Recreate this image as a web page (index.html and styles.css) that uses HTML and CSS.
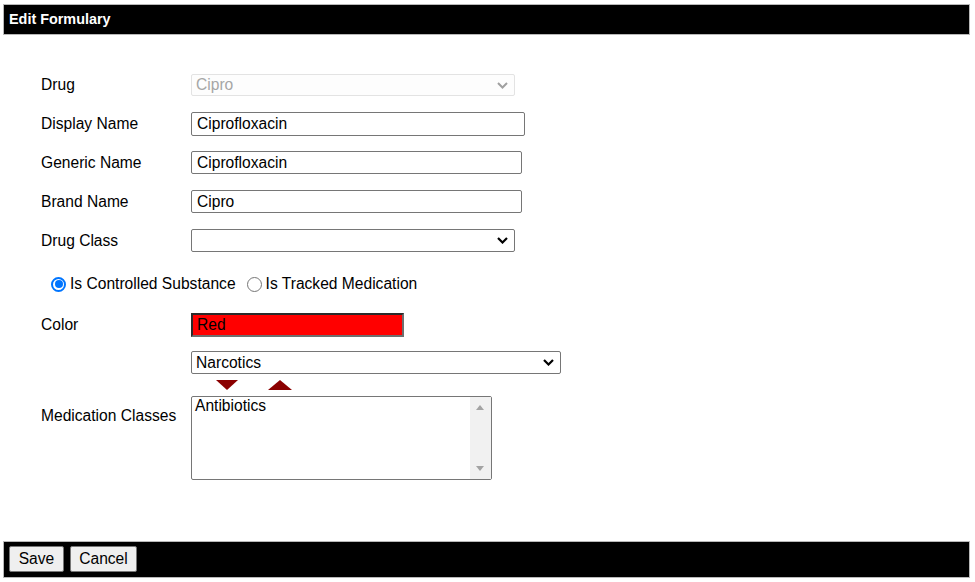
FILE: index.html
```html
<!DOCTYPE html>
<html>
<head>
<meta charset="utf-8">
<title>Edit Formulary</title>
<link rel="stylesheet" href="styles.css">
</head>
<body>
<div class="page">
  <div class="titlebar">Edit Formulary</div>
  <div class="form">
    <div class="row">
      <label class="lbl">Drug</label>
      <div class="sel sel-drug disabled">
        <span class="sel-text">Cipro</span>
        <svg class="chev" width="11" height="7" viewBox="0 0 11 7"><path d="M1 1 L5.5 5.5 L10 1" fill="none" stroke="#a0a0a0" stroke-width="2"/></svg>
      </div>
    </div>
    <div class="row">
      <label class="lbl">Display Name</label>
      <input class="txt txt-display" type="text" value="Ciprofloxacin">
    </div>
    <div class="row">
      <label class="lbl">Generic Name</label>
      <input class="txt txt-generic" type="text" value="Ciprofloxacin">
    </div>
    <div class="row">
      <label class="lbl">Brand Name</label>
      <input class="txt txt-generic" type="text" value="Cipro">
    </div>
    <div class="row">
      <label class="lbl">Drug Class</label>
      <div class="sel sel-class">
        <span class="sel-text"></span>
        <svg class="chev" width="11" height="7" viewBox="0 0 11 7"><path d="M1 1 L5.5 5.5 L10 1" fill="none" stroke="#000" stroke-width="2.2"/></svg>
      </div>
    </div>
    <div class="radios">
      <span class="radio checked"></span><span class="rlabel">Is Controlled Substance</span>
      <span class="radio"></span><span class="rlabel">Is Tracked Medication</span>
    </div>
    <div class="row row-color">
      <label class="lbl">Color</label>
      <div class="colorbox">Red</div>
    </div>
    <div class="row row-med">
      <label class="lbl">Medication Classes</label>
      <div class="stack">
        <div class="sel sel-narc">
          <span class="sel-text">Narcotics</span>
          <svg class="chev" width="11" height="7" viewBox="0 0 11 7"><path d="M1 1 L5.5 5.5 L10 1" fill="none" stroke="#000" stroke-width="2.2"/></svg>
        </div>
        <div class="arrows">
          <span class="tri-down"></span>
          <span class="tri-up"></span>
        </div>
        <div class="listbox">
          <div class="list-items"><div class="item">Antibiotics</div></div>
          <div class="scroll">
            <span class="sc-up"></span>
            <span class="sc-down"></span>
          </div>
        </div>
      </div>
    </div>
  </div>
  <div class="footer">
    <button class="btn btn-save">Save</button>
    <button class="btn btn-cancel">Cancel</button>
  </div>
</div>
</body>
</html>
```
FILE: styles.css
```css
* { box-sizing: border-box; }
html, body { margin: 0; padding: 0; background: #fff; }
body { font-family: "Liberation Sans", Arial, sans-serif; font-size: 15.6px; color: #000; }

.page { padding: 4px 5px 0 3px; width: 975px; }

.titlebar {
  height: 31px;
  background: #000;
  border: 1px solid #b8b8b8;
  color: #fff;
  font-weight: bold;
  font-size: 14.4px;
  line-height: 29px;
  padding-left: 5px;
}

.form { padding: 30px 0 0 38px; }

.row { display: flex; align-items: center; height: 39px; }
.lbl { width: 150px; flex: none; }

.txt {
  font-family: "Liberation Sans", Arial, sans-serif;
  font-size: 15.6px;
  color: #000;
  height: 23px;
  border: 1px solid #767676;
  border-radius: 2px;
  padding: 0 5px;
  background: #fff;
  outline: none;
}
.txt-display { width: 334px; height: 24px; }
.txt-generic { width: 331px; }

.sel {
  position: relative;
  height: 23px;
  border: 1px solid #767676;
  border-radius: 2px;
  background: #fff;
  padding: 0 4px;
  line-height: 21px;
  display: flex;
  align-items: center;
}
.sel .chev { position: absolute; right: 6px; top: 7px; }
.sel-drug { width: 324px; height: 22px; }
.sel-class { width: 324px; }
.sel-narc { width: 370px; }
.disabled { border-color: #e3e3e3; color: #a6a6a6; background: #fdfdfd; }

.radios {
  display: flex;
  align-items: center;
  height: 48px;
  padding-left: 10px;
}
.radio {
  width: 15px; height: 15px;
  border: 1px solid #767676;
  border-radius: 50%;
  background: #fff;
  flex: none;
  margin-right: 4px;
  position: relative;
}
.radio.checked { border: 2px solid #0075ff; }
.radio.checked::after {
  content: "";
  position: absolute;
  left: 1.5px; top: 1.5px;
  width: 8px; height: 8px;
  border-radius: 50%;
  background: #0075ff;
}
.rlabel { margin-right: 11px; }

.row-color { height: 34px; }
.colorbox {
  width: 213px;
  height: 24px;
  background: #ff0000;
  border: 2px solid;
  border-color: #2a2a2a #6e6e6e #6e6e6e #2a2a2a;
  padding-left: 4px;
  line-height: 20px;
}

.row-med { height: auto; margin-top: 9px; }
.stack { display: flex; flex-direction: column; }
.arrows { height: 22px; display: flex; align-items: center; padding-left: 25px; }
.tri-down {
  width: 0; height: 0;
  border-left: 11px solid transparent;
  border-right: 11px solid transparent;
  border-top: 10px solid #8b0000;
  margin-right: 30px;
}
.tri-up {
  width: 0; height: 0;
  border-left: 12px solid transparent;
  border-right: 12px solid transparent;
  border-bottom: 10px solid #8b0000;
}
.listbox {
  width: 301px;
  height: 84px;
  border: 1px solid #767676;
  border-radius: 2px;
  display: flex;
  background: #fff;
}
.list-items { flex: 1; padding: 0 3px; line-height: 18px; }
.scroll {
  width: 21px;
  background: #f1f1f1;
  position: relative;
}
.sc-up, .sc-down { position: absolute; left: 6px; width: 0; height: 0; border-left: 4px solid transparent; border-right: 4px solid transparent; }
.sc-up { top: 8px; border-bottom: 5px solid #a3a3a3; }
.sc-down { bottom: 8px; border-top: 5px solid #a3a3a3; }

.footer {
  margin-top: 61px;
  height: 37px;
  background: #000;
  border: 1px solid #b8b8b8;
  padding: 4px 0 0 5px;
  display: flex;
  gap: 6px;
  align-items: flex-start;
}
.btn {
  font-family: "Liberation Sans", Arial, sans-serif;
  font-size: 15.6px;
  color: #000;
  height: 26px;
  background: #efefef;
  border: 1px solid #767676;
  border-radius: 2px;
  padding: 0 7px;
}
.btn-save { width: 55px; }
.btn-cancel { width: 67px; }
```
